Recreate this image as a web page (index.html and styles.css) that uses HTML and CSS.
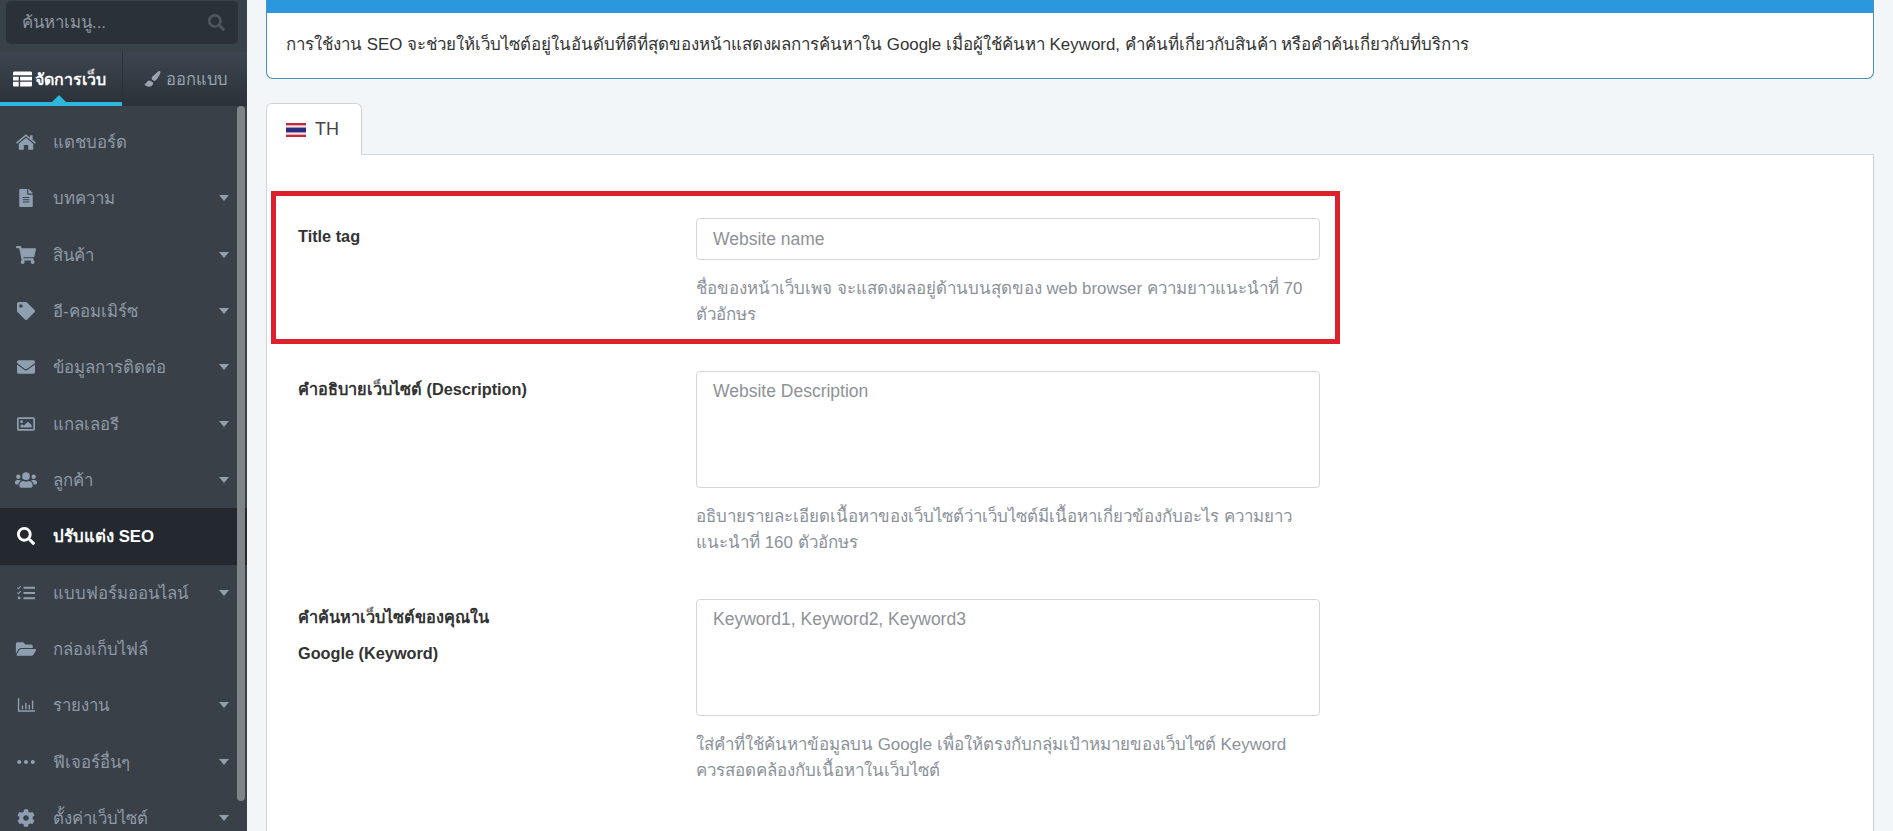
FILE: index.html
```html
<!DOCTYPE html>
<html lang="th">
<head>
<meta charset="utf-8">
<title>ปรับแต่ง SEO</title>
<link rel="stylesheet" href="styles.css">
</head>
<body>
<div class="app">
  <aside class="sidebar">
    <div class="search-wrap">
      <div class="search">
        <input class="search-input" placeholder="ค้นหาเมนู...">
        <svg class="search-icon" viewBox="0 0 512 512"><path d="M505 442.7L405.3 343c-4.5-4.5-10.6-7-17-7H372c27.6-35.3 44-79.7 44-128C416 93.1 322.9 0 208 0S0 93.1 0 208s93.1 208 208 208c48.3 0 92.7-16.4 128-44v16.3c0 6.4 2.5 12.5 7 17l99.7 99.7c9.4 9.4 24.6 9.4 33.9 0l28.3-28.3c9.4-9.4 9.4-24.6.1-34zM208 336c-70.7 0-128-57.2-128-128 0-70.7 57.2-128 128-128 70.7 0 128 57.2 128 128 0 70.7-57.2 128-128 128z"/></svg>
      </div>
    </div>
    <div class="side-tabs">
      <div class="side-tab active">
        <svg class="tab-icon" viewBox="0 0 20 16"><path d="M0 1.5C0 .7.7 0 1.500 0h17c.8 0 1.500.7 1.500 1.500V4H0zM0 5.500h6v4H0zM7.500 5.500H20v4H7.500zM0 11h6v5H1.500C.7 16 0 15.300 0 14.500zM7.500 11H20v3.500c0 .8-.7 1.500-1.500 1.500h-11z"/></svg>
        <span>จัดการเว็บ</span>
      </div>
      <div class="side-tab">
        <svg class="tab-icon" viewBox="0 0 512 512"><path d="M170 300c-50 4-96 26-120 92-4 10-13 16-24 16-14 0-22-4-26-8 0 50 60 100 130 100 90 0 146-50 146-112 0-6 0-12-2-18zM470 0c-14 0-27 6-37 15C260 170 230 190 230 236c0 12 3 23 8 33l54 45c6 2 13 2 19 2 54 0 85-39 182-220 7-12 19-37 19-56C512 18 492 0 470 0z"/></svg>
        <span>ออกแบบ</span>
      </div>
    </div>
    <nav class="menu">
      <a class="menu-item">
        <svg class="mi" viewBox="0 0 576 512"><path d="M288 32 0 272l30 36L288 93l258 215 30-36-98-82V64h-72v66zM288 134 80 307v157c0 9 7 16 16 16h128V344h128v136h128c9 0 16-7 16-16V307z"/></svg>
        <span class="ml">แดชบอร์ด</span>
      </a>
      <a class="menu-item">
        <svg class="mi" viewBox="0 0 512 512"><g transform="translate(64 0)"><path d="M224 136V0H24C10.700 0 0 10.700 0 24v464c0 13.300 10.700 24 24 24h336c13.300 0 24-10.700 24-24V160H248c-13.200 0-24-10.800-24-24zm64 236c0 6.600-5.400 12-12 12H108c-6.600 0-12-5.400-12-12v-8c0-6.600 5.400-12 12-12h168c6.600 0 12 5.400 12 12v8zm0-64c0 6.600-5.400 12-12 12H108c-6.600 0-12-5.400-12-12v-8c0-6.600 5.400-12 12-12h168c6.600 0 12 5.400 12 12v8zm0-72v8c0 6.600-5.400 12-12 12H108c-6.600 0-12-5.400-12-12v-8c0-6.600 5.400-12 12-12h168c6.600 0 12 5.400 12 12zm96-114.100v6.100H256V0h6.100c6.400 0 12.500 2.500 17 7l97.900 98c4.500 4.500 7 10.600 7 16.900z"/></g></svg>
        <span class="ml">บทความ</span><i class="caret"></i>
      </a>
      <a class="menu-item">
        <svg class="mi" viewBox="0 0 576 512"><path d="M528.120 301.319l47.273-208C578.806 78.301 567.391 64 551.990 64H159.208l-9.166-44.810C147.758 8.021 137.930 0 126.529 0H24C10.745 0 0 10.745 0 24v16c0 13.255 10.745 24 24 24h69.883l70.248 343.435C147.325 417.100 136 435.222 136 456c0 30.928 25.072 56 56 56s56-25.072 56-56c0-15.674-6.447-29.835-16.824-40h209.647C430.447 426.165 424 440.326 424 456c0 30.928 25.072 56 56 56s56-25.072 56-56c0-22.172-12.888-41.332-31.579-50.405l5.517-24.276c3.413-15.018-8.002-29.319-23.403-29.319H218.117l-6.545-32h293.145c11.206 0 20.920-7.754 23.403-18.681z"/></svg>
        <span class="ml">สินค้า</span><i class="caret"></i>
      </a>
      <a class="menu-item">
        <svg class="mi" viewBox="0 0 512 512"><path d="M0 252.118V48C0 21.490 21.490 0 48 0h204.118a48 48 0 0 1 33.941 14.059l211.882 211.882c18.745 18.745 18.745 49.137 0 67.882L293.823 497.941c-18.745 18.745-49.137 18.745-67.882 0L14.059 286.059A48 48 0 0 1 0 252.118zM112 64c-26.510 0-48 21.490-48 48s21.490 48 48 48 48-21.490 48-48-21.490-48-48-48z"/></svg>
        <span class="ml">อี-คอมเมิร์ซ</span><i class="caret"></i>
      </a>
      <a class="menu-item">
        <svg class="mi" viewBox="0 0 512 512"><path d="M502.300 190.800c3.900-3.100 9.700-.2 9.700 4.700V400c0 26.500-21.500 48-48 48H48c-26.500 0-48-21.500-48-48V195.600c0-5 5.700-7.800 9.700-4.700 22.400 17.400 52.100 39.500 154.100 113.600 21.100 15.400 56.700 47.800 92.200 47.600 35.700.3 72-32.800 92.300-47.600 102-74.100 131.600-96.300 154-113.700zM256 320c23.200.4 56.600-29.200 73.400-41.400 132.700-96.300 142.800-104.700 173.400-128.700 5.800-4.500 9.200-11.500 9.200-18.900v-19c0-26.500-21.500-48-48-48H48C21.500 64 0 85.500 0 112v19c0 7.400 3.400 14.300 9.200 18.900 30.600 23.900 40.700 32.400 173.400 128.700 16.800 12.200 50.200 41.800 73.400 41.400z"/></svg>
        <span class="ml">ข้อมูลการติดต่อ</span><i class="caret"></i>
      </a>
      <a class="menu-item">
        <svg class="mi" viewBox="0 0 512 512"><path fill-rule="evenodd" d="M48 64h416c26.500 0 48 21.500 48 48v288c0 26.500-21.500 48-48 48H48c-26.500 0-48-21.500-48-48V112c0-26.500 21.500-48 48-48zm6 48c-3.300 0-6 2.700-6 6v276c0 3.300 2.700 6 6 6h404c3.300 0 6-2.700 6-6V118c0-3.300-2.700-6-6-6zM128 152a40 40 0 1 1 0 80 40 40 0 0 1 0-80zM96 352v-48l48-48 48 48 120-120 104 104v64z"/></svg>
        <span class="ml">แกลเลอรี</span><i class="caret"></i>
      </a>
      <a class="menu-item">
        <svg class="mi mi-wide" viewBox="0 0 640 512"><path d="M96 224a64 64 0 1 0 0-128 64 64 0 0 0 0 128zm448 0a64 64 0 1 0 0-128 64 64 0 0 0 0 128zm32 32h-64c-17.600 0-33.500 7.100-45.100 18.600 40.300 22.100 68.900 62 75.100 109.400h66c17.700 0 32-14.300 32-32v-32c0-35.300-28.700-64-64-64zm-256 0a112 112 0 1 0 0-224 112 112 0 0 0 0 224zm76.800 32h-8.300c-20.800 10-43.900 16-68.500 16s-47.600-6-68.500-16h-8.300C179.600 288 128 339.600 128 403.200V432c0 26.500 21.500 48 48 48h288c26.500 0 48-21.500 48-48v-28.800c0-63.600-51.600-115.200-115.200-115.200zm-223.700-13.400C161.500 263.100 145.600 256 128 256H64c-35.300 0-64 28.700-64 64v32c0 17.700 14.300 32 32 32h65.900c6.300-47.400 34.900-87.300 75.200-109.400z"/></svg>
        <span class="ml">ลูกค้า</span><i class="caret"></i>
      </a>
      <a class="menu-item current">
        <svg class="mi" viewBox="0 0 512 512"><path d="M505 442.700L405.300 343c-4.500-4.500-10.600-7-17-7H372c27.600-35.300 44-79.700 44-128C416 93.100 322.900 0 208 0S0 93.100 0 208s93.100 208 208 208c48.300 0 92.700-16.400 128-44v16.300c0 6.400 2.500 12.500 7 17l99.700 99.700c9.400 9.400 24.600 9.400 33.900 0l28.300-28.300c9.400-9.400 9.400-24.600.1-34zM208 336c-70.700 0-128-57.200-128-128 0-70.700 57.200-128 128-128 70.700 0 128 57.200 128 128 0 70.700-57.200 128-128 128z"/></svg>
        <span class="ml">ปรับแต่ง SEO</span>
      </a>
      <a class="menu-item">
        <svg class="mi" viewBox="0 0 512 512"><path d="M184 80h328v56H184zM184 228h328v56H184zM184 376h328v56H184zM20 90l22 22L92 50l24 20-72 86-44-42zM20 232l22 22 50-62 24 20-72 86-44-42zM60 356a40 40 0 1 1 0 80 40 40 0 0 1 0-80z"/></svg>
        <span class="ml">แบบฟอร์มออนไลน์</span><i class="caret"></i>
      </a>
      <a class="menu-item">
        <svg class="mi mi-wide" viewBox="0 0 576 512"><path d="M572.694 292.093L500.270 416.248A63.997 63.997 0 0 1 444.989 448H45.025c-18.523 0-30.064-20.093-20.731-36.093l72.424-124.155A64 64 0 0 1 152 256h399.964c18.523 0 30.064 20.093 20.730 36.093zM152 224h328v-48c0-26.510-21.490-48-48-48H272l-64-64H48C21.490 64 0 85.490 0 112v278.046l69.077-118.418C86.214 242.250 117.989 224 152 224z"/></svg>
        <span class="ml">กล่องเก็บไฟล์</span>
      </a>
      <a class="menu-item">
        <svg class="mi" viewBox="0 0 512 512"><path d="M24 64h40v344h448v40H24zM136 272h40v104h-40zM232 200h40v176h-40zM328 248h40v128h-40zM424 128h40v248h-40z"/></svg>
        <span class="ml">รายงาน</span><i class="caret"></i>
      </a>
      <a class="menu-item">
        <svg class="mi" viewBox="0 0 512 512"><circle cx="64" cy="256" r="58"/><circle cx="256" cy="256" r="58"/><circle cx="448" cy="256" r="58"/></svg>
        <span class="ml">ฟีเจอร์อื่นๆ</span><i class="caret"></i>
      </a>
      <a class="menu-item">
        <svg class="mi" viewBox="0 0 512 512"><path d="M487.400 315.700l-42.600-24.600c4.300-23.200 4.300-47 0-70.200l42.600-24.600c4.900-2.800 7.100-8.600 5.500-14-11.100-35.600-30-67.800-54.700-94.600-3.800-4.100-10-5.100-14.800-2.300L380.800 110c-17.900-15.400-38.500-27.300-60.800-35.100V25.800c0-5.600-3.900-10.500-9.400-11.700-36.700-8.200-74.300-7.800-109.200 0-5.500 1.200-9.400 6.100-9.400 11.700V75c-22.200 7.900-42.800 19.800-60.800 35.100L88.700 85.500c-4.900-2.800-11-1.900-14.800 2.300-24.700 26.700-43.600 58.900-54.700 94.600-1.700 5.400.6 11.200 5.500 14L67.300 221c-4.300 23.200-4.300 47 0 70.200l-42.600 24.600c-4.900 2.800-7.100 8.600-5.500 14 11.100 35.600 30 67.800 54.700 94.600 3.800 4.100 10 5.100 14.800 2.300l42.600-24.600c17.900 15.400 38.500 27.300 60.800 35.100v49.200c0 5.600 3.900 10.500 9.400 11.700 36.700 8.200 74.300 7.800 109.200 0 5.500-1.200 9.400-6.100 9.400-11.700v-49.200c22.200-7.900 42.800-19.800 60.800-35.100l42.600 24.600c4.900 2.800 11 1.900 14.800-2.300 24.700-26.700 43.600-58.900 54.700-94.600 1.500-5.500-.7-11.300-5.600-14.100zM256 336c-44.100 0-80-35.900-80-80s35.900-80 80-80 80 35.900 80 80-35.900 80-80 80z"/></svg>
        <span class="ml">ตั้งค่าเว็บไซต์</span><i class="caret"></i>
      </a>
      <div class="scroll-thumb"></div>
    </nav>
  </aside>

  <main class="main">
    <div class="alert">
      <div class="alert-bar"></div>
      <p class="alert-text">การใช้งาน SEO จะช่วยให้เว็บไซต์อยู่ในอันดับที่ดีที่สุดของหน้าแสดงผลการค้นหาใน Google เมื่อผู้ใช้ค้นหา Keyword, คำค้นที่เกี่ยวกับสินค้า หรือคำค้นเกี่ยวกับที่บริการ</p>
    </div>
    <div class="tabs">
      <div class="tab">
        <svg class="flag" viewBox="0 0 20 14"><rect width="20" height="14" fill="#c8283c"/><rect y="2.300" width="20" height="9.400" fill="#f4dfe4"/><rect y="4.600" width="20" height="4.800" fill="#2b2c7c"/></svg>
        <span>TH</span>
      </div>
    </div>
    <section class="panel">
      <div class="annotation"></div>
      <div class="row row-title">
        <label class="label">Title tag</label>
        <div class="field">
          <input class="control" placeholder="Website name">
          <p class="help">ชื่อของหน้าเว็บเพจ จะแสดงผลอยู่ด้านบนสุดของ web browser ความยาวแนะนำที่ 70<br>ตัวอักษร</p>
        </div>
      </div>
      <div class="row row-next">
        <label class="label">คำอธิบายเว็บไซต์ (Description)</label>
        <div class="field">
          <textarea class="control area" placeholder="Website Description"></textarea>
          <p class="help">อธิบายรายละเอียดเนื้อหาของเว็บไซต์ว่าเว็บไซต์มีเนื้อหาเกี่ยวข้องกับอะไร ความยาว<br>แนะนำที่ 160 ตัวอักษร</p>
        </div>
      </div>
      <div class="row row-next">
        <label class="label">คำค้นหาเว็บไซต์ของคุณใน<br>Google (Keyword)</label>
        <div class="field">
          <textarea class="control area" placeholder="Keyword1, Keyword2, Keyword3"></textarea>
          <p class="help">ใส่คำที่ใช้ค้นหาข้อมูลบน Google เพื่อให้ตรงกับกลุ่มเป้าหมายของเว็บไซต์ Keyword<br>ควรสอดคล้องกับเนื้อหาในเว็บไซต์</p>
        </div>
      </div>
    </section>
  </main>
</div>
</body>
</html>
```

FILE: styles.css
```css
* { box-sizing: border-box; }
html, body { margin: 0; height: 831px; overflow: hidden; }
body { font-family: "Liberation Sans", Tahoma, "Noto Sans", sans-serif; background: #f3f6f9; color: #333; }
.app { display: flex; height: 831px; }

.sidebar { width: 247px; flex: none; background: #394047; height: 831px; overflow: hidden; display: flex; flex-direction: column; }
.search-wrap { height: 52px; padding: 1px 9px 0 6px; flex: none; background: #3a4249; }
.search { height: 43px; background: #2b3138; border-radius: 5px; display: flex; align-items: center; padding: 0 13px 0 16px; }
.search-input { flex: 1; min-width: 0; background: none; border: 0; outline: 0; font: 16.800px "Liberation Sans", sans-serif; color: #8b95a0; padding: 0; }
.search-input::placeholder { color: #8f98a2; opacity: 1; }
.search-icon { width: 17px; height: 17px; fill: #4e565e; }

.side-tabs { display: flex; height: 54px; flex: none; background: linear-gradient(#3c4650, #2b3138); }
.side-tab { flex: 1; display: flex; align-items: center; justify-content: center; gap: 4px; font-size: 16.500px; color: #9aa4b0; border-left: 1px solid #2b3138; position: relative; }
.side-tab.active { flex: none; width: 122px; color: #fff; font-weight: 700; font-size: 16px; gap: 3px; padding-right: 3px; border-left: 0; border-bottom: 4px solid #2fb6dc; padding-top: 4px; }
.side-tab.active::after { content: ""; position: absolute; left: 52px; bottom: 0; border: 7px solid transparent; border-top: 0; border-bottom-color: #2fb6dc; }
.tab-icon { width: 19px; height: 16px; fill: currentColor; }

.menu { position: relative; padding-top: 8px; flex: none; }
.menu-item { display: flex; align-items: center; height: 56.330px; padding: 0 18px 0 16px; font-size: 16.800px; color: #8f9aa8; }
.mi { width: 20px; height: 18px; fill: #8f9fb2; flex: none; }
.mi-wide { width: 22px; margin-left: -1px; margin-right: -1px; }
.ml { margin-left: 17px; flex: 1; }
.caret { width: 0; height: 0; border: 5.500px solid transparent; border-top: 6px solid #8f9fb2; border-bottom: 0; }
.menu-item.current { background: #24292f; color: #fff; font-weight: 700; }
.current .mi { fill: #fff; }
.scroll-thumb { position: absolute; top: 0; right: 2px; width: 8px; height: 695px; background: #7f8488; border-radius: 4px; }

.main { flex: 1; min-width: 0; padding-left: 19px; padding-right: 19px; }
.alert { height: 79px; background: #fff; border: 1px solid #4a90b8; border-top: 0; border-radius: 0 0 7px 7px; overflow: hidden; }
.alert-bar { height: 13px; background: #2b98de; margin: 0 -1px; }
.alert-text { margin: 0; padding: 21px 19px 0; font-size: 16.900px; line-height: 22px; color: #333; }

.tabs { display: flex; height: 51px; margin-top: 24px; }
.tab { width: 96px; height: 52px; background: #fff; border: 1px solid #cfd4da; border-bottom: 0; border-radius: 6px 6px 0 0; display: flex; align-items: center; gap: 9px; padding: 0 19px; font-size: 18px; color: #444; position: relative; z-index: 1; }
.flag { width: 20px; height: 14px; flex: none; }

.panel { position: relative; background: #fff; border: 1px solid #cfd4da; height: 700px; padding: 0 0 0 31px; }
.annotation { position: absolute; left: 4px; top: 36px; width: 1069px; height: 153px; border: 5px solid #dc212c; pointer-events: none; }
.row { display: flex; }
.label { width: 398px; flex: none; font-size: 16.300px; font-weight: 700; line-height: 36px; color: #333; }
.field { width: 624px; flex: none; }
.control { display: block; width: 100%; height: 42px; border: 1px solid #d3d6da; border-radius: 4px; padding: 0 16px; font: 17.500px "Liberation Sans", sans-serif; color: #333; background: #fff; outline: 0; }
.control::placeholder { color: #8e9297; opacity: 1; }
.area { height: 117px; padding-top: 9px; resize: none; }
.help { margin: 16px 0 0; font-size: 16.900px; line-height: 26px; color: #8a9199; }
.row-title { padding-top: 63px; }
.row-next { padding-top: 43px; }
```
